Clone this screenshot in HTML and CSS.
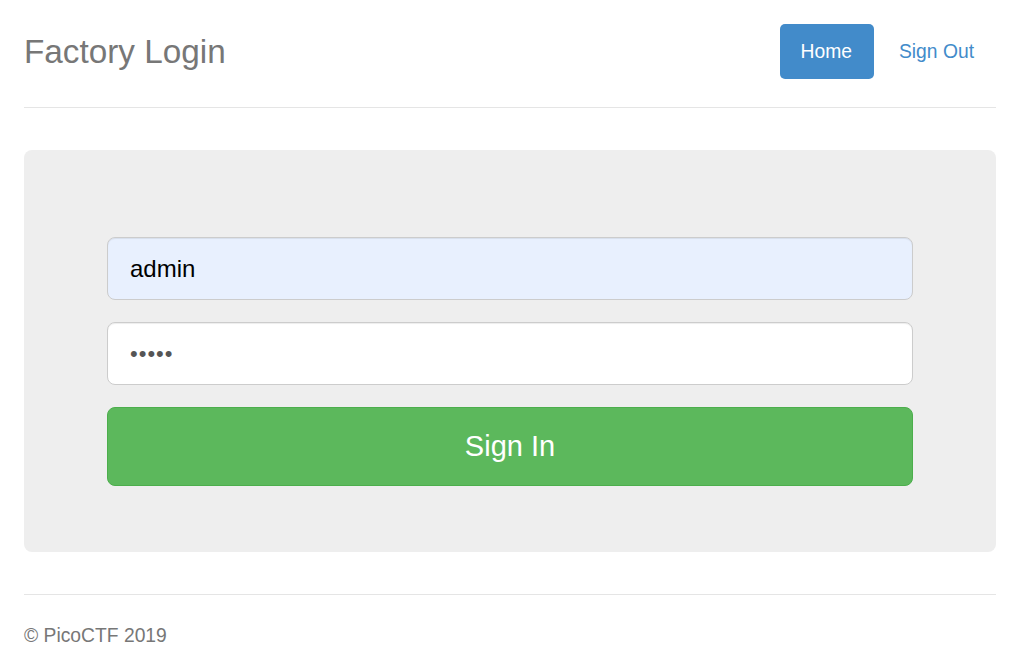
FILE: index.html
```html
<!DOCTYPE html>
<html>
<head>
<meta charset="utf-8">
<title>Factory Login</title>
<link rel="stylesheet" href="styles.css">
</head>
<body>
<div class="page">
  <header class="header">
    <h3 class="title">Factory Login</h3>
    <nav class="nav">
      <a class="pill active" href="#">Home</a>
      <a class="pill" href="#">Sign Out</a>
    </nav>
  </header>
  <main class="jumbotron">
    <form class="form">
      <input class="field autofill" type="text" value="admin">
      <input class="field" type="password" value="admin">
      <button class="btn" type="button">Sign In</button>
    </form>
  </main>
  <footer class="footer">
    <p>© PicoCTF 2019</p>
  </footer>
</div>
</body>
</html>
```

FILE: styles.css
```css
html, body {
  margin: 0;
  padding: 0;
  background: #fff;
}
body {
  font-family: "Liberation Sans", Arial, sans-serif;
  color: #333;
}
.page {
  padding: 24px 28px 0 24px;
}
.header {
  display: flex;
  justify-content: space-between;
  align-items: center;
  height: 56px;
  padding-bottom: 27px;
  border-bottom: 1px solid #e5e5e5;
}
.title {
  margin: 0;
  font-size: 33.3px;
  font-weight: normal;
  line-height: 58px;
  color: #777;
}
.nav {
  display: flex;
  gap: 4px;
  height: 56px;
}
.pill {
  display: flex;
  align-items: center;
  padding: 0 22px 0 21px;
  height: 55px;
  border-radius: 5px;
  font-size: 19.3px;
  color: #428bca;
  text-decoration: none;
}
.pill.active {
  background: #428bca;
  color: #fff;
}
.jumbotron {
  margin-top: 42px;
  background: #eee;
  border-radius: 8px;
  padding: 87px 83px 66px;
}
.form {
  display: flex;
  flex-direction: column;
  gap: 22px;
  margin: 0;
}
.field {
  box-sizing: border-box;
  height: 63px;
  width: 100%;
  padding: 0 22px;
  font-family: "Liberation Sans", Arial, sans-serif;
  font-size: 24px;
  color: #000;
  background: #fff;
  border: 1px solid #ccc;
  border-radius: 8px;
  box-shadow: inset 0 1px 1px rgba(0,0,0,.075);
  outline: none;
}
.field[type="password"] {
  color: #555;
  font-size: 22px;
  letter-spacing: 1px;
}
.field.autofill {
  background: #e8f0fe;
}
.btn {
  box-sizing: border-box;
  height: 79px;
  width: 100%;
  background: #5cb85c;
  border: 1px solid #4cae4c;
  border-radius: 8px;
  color: #fff;
  font-family: "Liberation Sans", Arial, sans-serif;
  font-size: 29px;
  cursor: pointer;
}
.footer {
  margin-top: 42px;
  border-top: 1px solid #e5e5e5;
  padding-top: 28px;
}
.footer p {
  margin: 0;
  font-size: 19.3px;
  color: #777;
  line-height: 26px;
}
```
